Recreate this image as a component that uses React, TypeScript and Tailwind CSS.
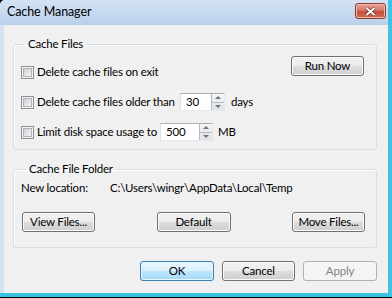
const font = "font-['Lato',sans-serif]";

function Checkbox() {
  return (
    <span className="w-[13px] h-[13px] shrink-0 border border-[#8e8f8f] bg-[#f4f4f4] p-[1px]">
      <span className="block w-full h-full border border-[#aeb3b9] bg-[linear-gradient(135deg,#cbcfd5,#f6f6f6)]" />
    </span>
  );
}

function Spinner({ value, width }: { value: string; width: string }) {
  return (
    <div className={`flex shrink-0 h-[18px] border border-[#abadb3] border-l-[#dbdfe6] border-b-[#e3e9ef] border-r-[#e3e9ef] bg-white ${width}`}>
      <span className="flex-1 pl-[5px] leading-[16px]">{value}</span>
      <div className="w-[13px] flex flex-col border-l border-[#b4b9c1] bg-[linear-gradient(to_bottom,#f5f5f5,#e0e2e5)]">
        <span className="flex-1 flex items-center justify-center border-b border-[#b4b9c1]">
          <span className="w-0 h-0 border-x-[3px] border-x-transparent border-b-[3px] border-b-[#6b7480]" />
        </span>
        <span className="flex-1 flex items-center justify-center">
          <span className="w-0 h-0 border-x-[3px] border-x-transparent border-t-[3px] border-t-[#6b7480]" />
        </span>
      </div>
    </div>
  );
}

function Button({ label, kind = "normal", width = "w-[73px]" }: { label: string; kind?: "normal" | "default" | "disabled"; width?: string }) {
  const styles = {
    normal:
      "border-[#707070] bg-[linear-gradient(to_bottom,#f2f2f2,#ebebeb_50%,#dddddd_50%,#cfcfcf)] text-black shadow-[inset_0_0_0_1px_#fcfcfc]",
    default:
      "border-[#3c7fb1] bg-[linear-gradient(to_bottom,#eaf6fd,#d9f0fc_50%,#bee6fd_50%,#a7d9f5)] text-black shadow-[inset_0_0_0_1px_#e8f6fd]",
    disabled: "border-[#adb2b5] bg-[#f4f4f4] text-[#838383]",
  };
  return (
    <button className={`h-[20px] ${width} rounded-[3px] border leading-[18px] text-center whitespace-nowrap ${styles[kind]}`}>
      {label}
    </button>
  );
}

export default function App() {
  return (
    <div className={`w-[392px] h-[298px] bg-black text-[11.5px] tracking-[-0.2px] text-black whitespace-nowrap ${font}`}>
      <div className="h-[297px] flex flex-col rounded-tl-[5px] bg-[#d3e1f1] border-r-[4px] border-b-[4px] border-[#3cc3e2]">
        {/* title bar */}
        <div className="h-[25px] flex items-center justify-between pl-[7px] pr-[2px] rounded-tl-[5px] bg-[linear-gradient(to_bottom,#d4e3f4,#b9d0ea)]">
          <span className="text-[12.5px] tracking-[-0.1px] leading-none text-black">Cache Manager</span>
          <button className="w-[31px] h-[16px] mb-[3px] rounded-[3px] border border-[#8d3b30] bg-[linear-gradient(to_bottom,#e8a293,#d6786a_45%,#c54f3f_55%,#d56b57)] flex items-center justify-center shadow-[inset_0_0_0_1px_#f0b8ab]">
            <svg width="11" height="9" viewBox="0 0 11 9">
              <path d="M1.5 1 L9.5 8 M9.5 1 L1.5 8" stroke="#5a1f18" strokeWidth="3.2" />
              <path d="M1.5 1 L9.5 8 M9.5 1 L1.5 8" stroke="#ffffff" strokeWidth="2" />
            </svg>
          </button>
        </div>

        {/* client area */}
        <div className="flex-1 ml-[4px] bg-[#f0f0f0] pl-[9px] pr-[11px] pt-[11px] flex flex-col">
          <fieldset className="border border-[#d5dfe5] rounded-[3px] pl-[7px] pr-[12px] pb-[8px] shadow-[inset_1px_1px_0_#ffffff]">
            <legend className="ml-[4px] px-[3px] leading-[16px]">Cache Files</legend>
            <div className="flex justify-between">
              <div className="flex flex-col mt-[11px] gap-[11px]">
                <div className="flex items-center h-[18px]">
                  <Checkbox />
                  <span className="ml-[3px]">Delete cache files on exit</span>
                </div>
                <div className="flex items-center h-[18px] mt-[1px]">
                  <Checkbox />
                  <span className="ml-[3px] w-[143px]">Delete cache files older than</span>
                  <Spinner value="30" width="w-[45px]" />
                  <span className="ml-[6px]">days</span>
                </div>
                <div className="flex items-center h-[18px] mt-[1px]">
                  <Checkbox />
                  <span className="ml-[3px] w-[123px]">Limit disk space usage to</span>
                  <Spinner value="500" width="w-[53px]" />
                  <span className="ml-[5px]">MB</span>
                </div>
              </div>
              <div className="mt-[4px]">
                <Button label="Run Now" width="w-[73px]" />
              </div>
            </div>
          </fieldset>

          <fieldset className="mt-[11px] border border-[#d5dfe5] rounded-[3px] pl-[8px] pr-[11px] pb-[15px] shadow-[inset_1px_1px_0_#ffffff]">
            <legend className="ml-[4px] px-[3px] leading-[16px]">Cache File Folder</legend>
            <div className="flex items-center h-[16px] mt-[3px] -ml-[1px]">
              <span className="w-[89px]">New location:</span>
              <span>C:\Users\wingr\AppData\Local\Temp</span>
            </div>
            <div className="flex justify-between mt-[16px]">
              <Button label="View Files..." />
              <Button label="Default" width="w-[74px]" />
              <Button label="Move Files..." />
            </div>
          </fieldset>

          <div className="flex justify-end gap-[8px] mt-[13px]">
            <Button label="OK" kind="default" width="w-[74px]" />
            <Button label="Cancel" />
            <Button label="Apply" kind="disabled" width="w-[74px]" />
          </div>
        </div>
      </div>
    </div>
  );
}
